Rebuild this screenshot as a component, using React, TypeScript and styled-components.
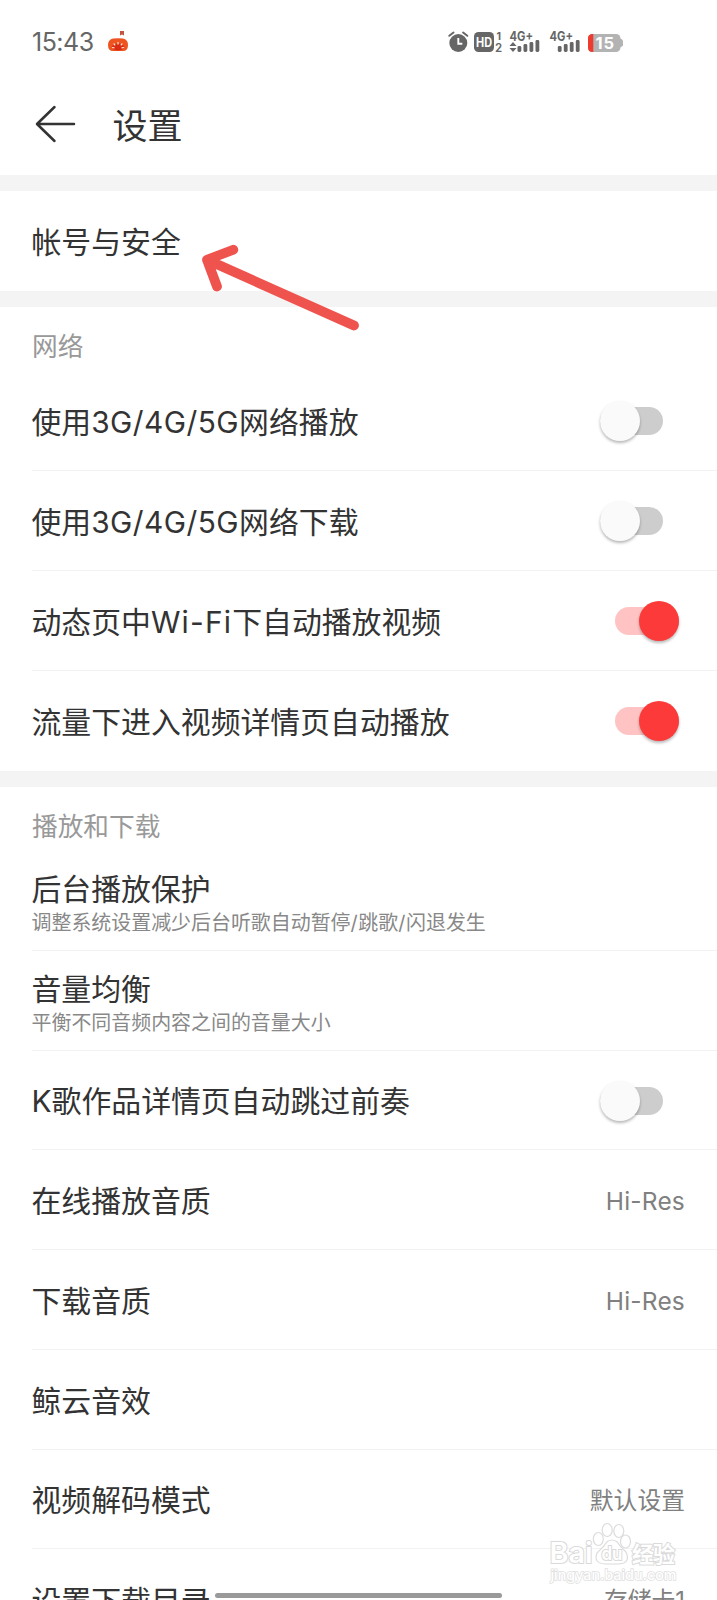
import React from "react";
import styled, { createGlobalStyle } from "styled-components";

const GlobalStyle = createGlobalStyle`
  * { box-sizing: border-box; }
  html, body { margin: 0; padding: 0; background: #fff; }
  body {
    font-family: Inter, "Noto Sans CJK SC", sans-serif;
    color: #333;
    overflow: hidden;
  }
`;

const Screen = styled.div`
  position: relative;
  width: 717px;
  height: 1600px;
  overflow: hidden;
  background: #fff;
`;

const StatusBar = styled.div`
  display: flex;
  align-items: center;
  height: 84px;
  padding: 0 94px 0 32px;
  color: #666;
`;

const Clock = styled.span`
  font-size: 25px;
  letter-spacing: -0.5px;
  width: 75px;
  white-space: nowrap;
`;

const StatusIcons = styled.svg`
  margin-left: auto;
  margin-bottom: 10px;
  display: block;
`;

const Header = styled.header`
  display: flex;
  align-items: center;
  height: 91.2px;
  padding: 0 0 7px 35px;
`;

const BackIcon = styled.svg`
  display: block;
  margin-top: -4px;
`;

const PageTitle = styled.h1`
  margin: 0 0 0 36.5px;
  font-size: 35px;
  font-weight: 400;
  line-height: 50px;
`;

const Band = styled.div`
  height: 16px;
  background: #f4f4f4;
`;

const SectionLabel = styled.div`
  height: 64.6px;
  padding: 18px 0 0 32px;
  font-size: 25.7px;
  line-height: 44px;
  color: #999;
`;

const Row = styled.div<{ $last?: boolean }>`
  display: flex;
  align-items: center;
  justify-content: space-between;
  height: 99.75px;
  margin-left: 32px;
  border-bottom: ${(p) => (p.$last ? "0" : "1.5px solid #f2f2f2")};
`;

const Texts = styled.div<{ $double?: boolean }>`
  display: flex;
  flex-direction: column;
  margin-left: -0.5px;
  padding-top: ${(p) => (p.$double ? "7px" : "2.6px")};
`;

const Label = styled.div`
  font-size: 29.87px;
  line-height: 38px;
  white-space: nowrap;
`;

const Latin = styled.span<{ $spacing: number }>`
  letter-spacing: ${(p) => p.$spacing}px;
`;

const Description = styled.div`
  font-size: 19.95px;
  line-height: 30px;
  color: #888;
  white-space: nowrap;
`;

const Value = styled.div<{ $cjk?: boolean }>`
  padding-right: 32px;
  padding-top: ${(p) => (p.$cjk ? "4px" : "3px")};
  font-size: ${(p) => (p.$cjk ? "23.8px" : "24.5px")};
  letter-spacing: ${(p) => (p.$cjk ? "0" : "0.2px")};
  line-height: 34px;
  color: #808080;
`;

const Track = styled.div<{ $on: boolean }>`
  display: flex;
  align-items: center;
  justify-content: ${(p) => (p.$on ? "flex-end" : "flex-start")};
  width: 63.5px;
  height: 28px;
  margin-top: 1px;
  margin-right: ${(p) => (p.$on ? "38.4px" : "53.9px")};
  border-radius: 14px;
  background: ${(p) => (p.$on ? "#ffc3c4" : "#cdcdcd")};
`;

const Thumb = styled.div<{ $on: boolean }>`
  flex: none;
  width: 40px;
  height: 40px;
  border-radius: 50%;
  background: ${(p) => (p.$on ? "#fc3a3a" : "#fafafa")};
  box-shadow: 0 2px 3px rgba(0, 0, 0, 0.28);
`;

const Pointer = styled.svg`
  position: absolute;
  left: 196px;
  top: 236px;
`;

const Watermark = styled.svg`
  position: absolute;
  left: 540px;
  top: 1515px;
`;

const HomeBar = styled.div`
  position: absolute;
  left: 215px;
  top: 1593px;
  width: 287px;
  height: 5px;
  border-radius: 3px;
  background: #999;
`;

function Toggle({ on }: { on: boolean }) {
  return (
    <Track $on={on} role="switch" aria-checked={on}>
      <Thumb $on={on} />
    </Track>
  );
}

function Pumpkin() {
  return (
    <svg width="22" height="22" viewBox="0 0 22 22">
      <path d="M13 0h4v4.500l-2-1-2 1z" fill="#c0563f" />
      <path
        d="M6 7.500Q11 6.800 16 7.500Q21 8.500 21 14Q21 20 16 20H6Q1 20 1 14Q1 8.500 6 7.500z"
        fill="#ee5420"
      />
      <ellipse cx="11" cy="16" rx="6" ry="3.500" fill="#d92c12" />
      <path
        d="M5 16.500l2.500 .3M6.700 12.500l1.500 1.800M11 11v2.500M15.300 12.500l-1.500 1.800M17 16.500l-2.500 .3"
        stroke="#ffe2cf"
        strokeWidth="1.200"
        fill="none"
      />
    </svg>
  );
}

function SystemIcons() {
  const bars = (x: number) =>
    [6, 8, 10, 12].map((h, i) => (
      <rect key={i} x={x + i * 6} y={37 - h} width="3.800" height={h} rx="1.400" />
    ));
  return (
    <StatusIcons width="177" height="44" viewBox="446 0 177 44" fill="#666">
      <circle cx="458.300" cy="28" r="9" />
      <path
        d="M449.300 20.800l4.200-3.300M467.300 20.800l-4.200-3.300"
        stroke="#666"
        strokeWidth="2"
        strokeLinecap="round"
      />
      <path d="M458.300 23v5.800h4" stroke="#fff" strokeWidth="1.900" fill="none" />
      <rect x="474" y="17" width="20" height="20" rx="4.500" />
      <text x="476" y="31.500" fontSize="12.500" fontWeight="700" fill="#fff" textLength="16" lengthAdjust="spacingAndGlyphs">
        HD
      </text>
      <text x="496.500" y="25" fontSize="10.500" fontWeight="700">1</text>
      <text x="495" y="36.700" fontSize="11.500" fontWeight="600">2</text>
      <text x="509.500" y="26" fontSize="13" fontWeight="700" textLength="23.500" lengthAdjust="spacingAndGlyphs">4G+</text>
      <path d="M513 27l3.500 4h-7zM513 37l3.500-4h-7z" />
      {bars(517.5)}
      <text x="549.500" y="26" fontSize="13" fontWeight="700" textLength="23.500" lengthAdjust="spacingAndGlyphs">4G+</text>
      {bars(557.8)}
      <rect x="588" y="19" width="32.500" height="18" rx="4.500" fill="#b3b3b3" />
      <path d="M620 23.500q3.500 1 3.500 4.500t-3.500 4.500z" fill="#b3b3b3" />
      <path d="M592.500 19h.8v18h-.8q-4.500 0-4.500-4.500v-9q0-4.500 4.500-4.500z" fill="#ee3b30" />
      <text x="595.500" y="34" fontSize="16.500" fontWeight="700" fill="#fff" textLength="18.500">
        15
      </text>
    </StatusIcons>
  );
}

const PlayLabel = ({ tail }: { tail: string }) => (
  <>
    使用<Latin $spacing={0.45}>3G/4G/5G</Latin>
    {tail}
  </>
);

export default function App() {
  return (
    <Screen>
      <GlobalStyle />
      <StatusBar>
        <Clock>15:43</Clock>
        <Pumpkin />
        <SystemIcons />
      </StatusBar>
      <Header>
        <BackIcon width="41" height="38" viewBox="0 0 41 38">
          <path
            d="M19.500 2L2 19L19.500 36M2.500 19H39"
            fill="none"
            stroke="#333"
            strokeWidth="2.500"
            strokeLinecap="round"
            strokeLinejoin="round"
          />
        </BackIcon>
        <PageTitle>设置</PageTitle>
      </Header>
      <Band />
      <Row $last>
        <Texts><Label>帐号与安全</Label></Texts>
      </Row>
      <Band />
      <SectionLabel>网络</SectionLabel>
      <Row>
        <Texts><Label><PlayLabel tail="网络播放" /></Label></Texts>
        <Toggle on={false} />
      </Row>
      <Row>
        <Texts><Label><PlayLabel tail="网络下载" /></Label></Texts>
        <Toggle on={false} />
      </Row>
      <Row>
        <Texts>
          <Label>动态页中<Latin $spacing={1.2}>Wi-Fi</Latin>下自动播放视频</Label>
        </Texts>
        <Toggle on />
      </Row>
      <Row $last>
        <Texts><Label>流量下进入视频详情页自动播放</Label></Texts>
        <Toggle on />
      </Row>
      <Band />
      <SectionLabel>播放和下载</SectionLabel>
      <Row>
        <Texts $double>
          <Label>后台播放保护</Label>
          <Description>
            调整系统设置减少后台听歌自动暂停<Latin $spacing={0.6}>/</Latin>跳歌
            <Latin $spacing={0.6}>/</Latin>闪退发生
          </Description>
        </Texts>
      </Row>
      <Row>
        <Texts $double>
          <Label>音量均衡</Label>
          <Description>平衡不同音频内容之间的音量大小</Description>
        </Texts>
      </Row>
      <Row>
        <Texts><Label>K歌作品详情页自动跳过前奏</Label></Texts>
        <Toggle on={false} />
      </Row>
      <Row>
        <Texts><Label>在线播放音质</Label></Texts>
        <Value>Hi-Res</Value>
      </Row>
      <Row>
        <Texts><Label>下载音质</Label></Texts>
        <Value>Hi-Res</Value>
      </Row>
      <Row>
        <Texts><Label>鲸云音效</Label></Texts>
      </Row>
      <Row>
        <Texts><Label>视频解码模式</Label></Texts>
        <Value $cjk>默认设置</Value>
      </Row>
      <Row $last>
        <Texts><Label>设置下载目录</Label></Texts>
        <Value $cjk>存储卡1</Value>
      </Row>

      <Pointer width="170" height="100" viewBox="196 236 170 100">
        <path
          d="M233.300 249.700L207 259.800L217 286.500M207 259.800L354 325.500"
          fill="none"
          stroke="#ef534e"
          strokeWidth="9.800"
          strokeLinecap="round"
          strokeLinejoin="round"
        />
      </Pointer>

      <Watermark width="150" height="80" viewBox="540 1515 150 80">
        <g fill="#fff" stroke="#dcdcdc" strokeWidth="1.200">
          <ellipse cx="598.300" cy="1539" rx="5" ry="6.500" />
          <ellipse cx="607.200" cy="1530" rx="5" ry="6.500" />
          <ellipse cx="618.800" cy="1531" rx="5" ry="6.500" />
          <ellipse cx="625.500" cy="1541.500" rx="5" ry="6.500" />
          <path d="M612 1540Q617 1540 620 1546L626 1552Q631 1563 619 1564H605Q593 1563 597 1553Q599 1551 604 1546Q607 1540 612 1540z" />
        </g>
        <g fill="#fff" stroke="#dadada" strokeWidth="2" paintOrder="stroke" fontWeight="600">
          <text x="549.500" y="1563" fontSize="28" textLength="43" lengthAdjust="spacingAndGlyphs">Bai</text>
          <text x="601.500" y="1560" fontSize="18" textLength="21" lengthAdjust="spacingAndGlyphs">du</text>
          <text x="632" y="1561.500" fontSize="22" fontWeight="700" textLength="43">经验</text>
          <text x="550.500" y="1580" fontSize="14.500" strokeWidth="1.500" stroke="#e0e0e0" fontWeight="500" textLength="126" lengthAdjust="spacingAndGlyphs">jingyan.baidu.com</text>
        </g>
      </Watermark>
      <HomeBar />
    </Screen>
  );
}
